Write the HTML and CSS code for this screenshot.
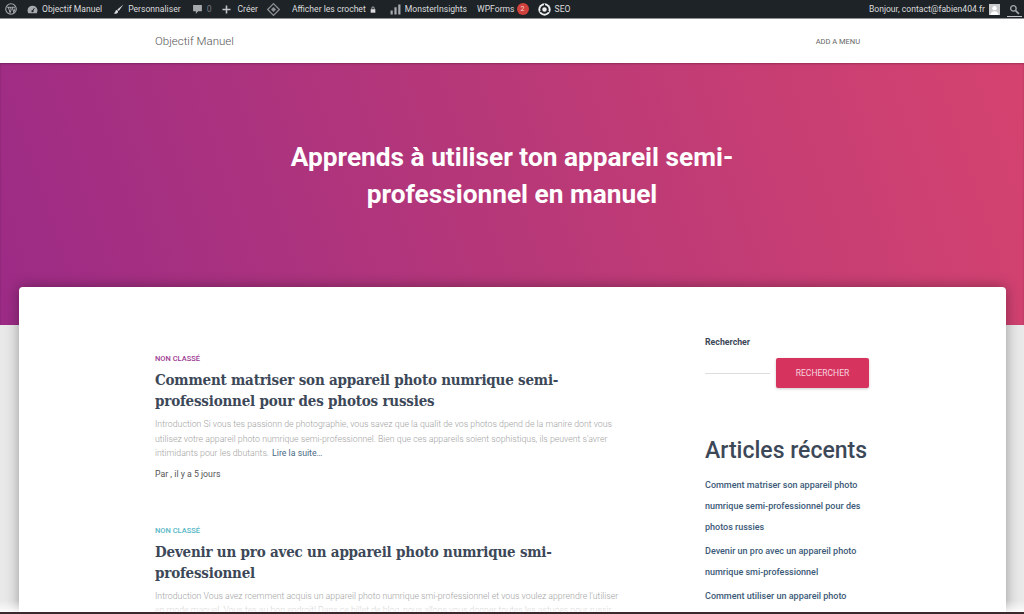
FILE: index.html
```html
<!DOCTYPE html>
<html lang="fr">
<head>
    <meta charset="UTF-8">
    <meta name="viewport" content="width=device-width, initial-scale=1.0">
    <title>Objectif Manuel</title>
    <link rel="stylesheet" href="styles.css">
</head>
<body>

    <div class="adminbar">
        <div class="adminbar-group">
            <svg class="icon wp-icon" viewBox="0 0 20 20"><circle cx="10" cy="10" r="8.800" fill="none" stroke="#a7aaad" stroke-width="1.800"/><path d="M3.500 7h6M5.500 7l3 9 1.800-5-1.300-4M10.500 7h6M12 7l2.600 8.500 2-6" fill="none" stroke="#a7aaad" stroke-width="1.700"/></svg>
            <span class="bar-item first-item">
                <svg class="icon" viewBox="0 0 20 20"><path d="M10 3a9 9 0 0 0-9 9c0 1.800.5 3.400 1.400 4.800h15.200A9 9 0 0 0 19 12a9 9 0 0 0-9-9z" fill="#a7aaad"/><path d="M10 12.500l3.500-5" stroke="#1d2327" stroke-width="1.800"/><circle cx="10" cy="13" r="2" fill="#1d2327"/></svg>
                Objectif Manuel
            </span>
            <span class="bar-item brush">
                <svg class="icon" viewBox="0 0 20 20"><path d="M19 1L8 10l2.500 2.500L19 1zM7 11c-2.500 0-2.500 2.500-3 3.500-.4.800-1.500 1.500-3 2.500 3.500 1.500 7 .5 8-2 .5-1.500-.5-4-2-4z" fill="#dcdcde"/></svg>
                Personnaliser
            </span>
            <span class="bar-item comments">
                <svg class="icon" viewBox="0 0 20 20"><path d="M2 2h16v11h-7l-4 5v-5H2z" fill="#a7aaad"/></svg>
                <span class="muted">0</span>
            </span>
            <span class="bar-item create">
                <svg class="icon plus" viewBox="0 0 20 20"><path d="M10 1v18M1 10h18" stroke="#c3c4c7" stroke-width="3.500"/></svg>
                Créer
            </span>
            <svg class="icon diamond" viewBox="0 0 20 20"><path d="M10 1l9 9-9 9-9-9z" fill="none" stroke="#8c8f94" stroke-width="2"/><path d="M10 6l4 4-4 4-4-4z" fill="#8c8f94"/></svg>
            <span class="bar-item hooks">
                Afficher les crochet
                <svg class="lock" viewBox="0 0 10 12"><path d="M1 5.500h8V11.500H1z" fill="#dcdcde"/><path d="M3 5.500V3.500a2 2 0 0 1 4 0v2" fill="none" stroke="#dcdcde" stroke-width="1.200"/></svg>
            </span>
            <span class="bar-item insights">
                <svg class="icon" viewBox="0 0 20 20"><path d="M1 12h4v7H1zM8 6h4v13H8zM15 1h4v18h-4z" fill="#a7aaad"/></svg>
                MonsterInsights
            </span>
            <span class="bar-item wpforms">WPForms <span class="count">2</span></span>
            <span class="bar-item seo">
                <svg class="icon seo-icon" viewBox="0 0 20 20"><circle cx="10" cy="10" r="9.500" fill="#f0f0f1"/><circle cx="10" cy="10" r="5" fill="none" stroke="#1d2327" stroke-width="3"/><path d="M10 1v4M2.500 14l3.500-2M17.500 14L14 12" stroke="#1d2327" stroke-width="1.500"/></svg>
                SEO
            </span>
        </div>
        <div class="adminbar-group">
            <span class="bar-item">Bonjour, contact@fabien404.fr</span>
            <svg class="avatar" viewBox="0 0 12 12"><rect width="12" height="12" fill="#c9cacb"/><circle cx="6" cy="4.500" r="2.400" fill="#fff"/><path d="M1.500 12c.5-3 2.500-4 4.500-4s4 1 4.500 4z" fill="#fff"/></svg>
            <span class="bar-search">
                <svg class="icon" viewBox="0 0 20 20"><circle cx="8" cy="8" r="5" fill="none" stroke="#a7aaad" stroke-width="2.400"/><path d="M12 12l6 6" stroke="#a7aaad" stroke-width="3"/></svg>
            </span>
        </div>
    </div>

    <div class="site-header">
        <a class="site-title">Objectif Manuel</a>
        <a class="add-menu">ADD A MENU</a>
    </div>

    <div class="hero">
        <h1>Apprends à utiliser ton appareil semi-professionnel en manuel</h1>
    </div>

    <div class="page-band">
        <div class="card">
            <div class="posts">
                <div class="post">
                    <div class="category purple">NON CLASSÉ</div>
                    <h2>Comment matriser son appareil photo numrique semi-professionnel pour des photos russies</h2>
                    <p class="excerpt">Introduction Si vous tes passionn de photographie, vous savez que la qualit de vos photos dpend de la manire dont vous utilisez votre appareil photo numrique semi-professionnel. Bien que ces appareils soient sophistiqus, ils peuvent s'avrer intimidants pour les dbutants. <a class="more">Lire la suite…</a></p>
                    <p class="byline">Par , il y a 5 jours</p>
                </div>
                <div class="post">
                    <div class="category teal">NON CLASSÉ</div>
                    <h2>Devenir un pro avec un appareil photo numrique smi-professionnel</h2>
                    <p class="excerpt">Introduction Vous avez rcemment acquis un appareil photo numrique smi-professionnel et vous voulez apprendre l'utiliser en mode manuel. Vous tes au bon endroit! Dans ce billet de blog, nous allons vous donner toutes les astuces pour russir</p>
                </div>
            </div>
            <div class="sidebar">
                <div class="widget-label">Rechercher</div>
                <div class="search-row">
                    <div class="search-input"></div>
                    <button class="search-btn">RECHERCHER</button>
                </div>
                <h3>Articles récents</h3>
                <ul class="recent">
                    <li>Comment matriser son appareil photo numrique semi-professionnel pour des photos russies</li>
                    <li>Devenir un pro avec un appareil photo numrique smi-professionnel</li>
                    <li>Comment utiliser un appareil photo</li>
                </ul>
            </div>
        </div>
    </div>

    <div class="bottom-fade"></div>

</body>
</html>
```

FILE: styles.css
```css
html, body {
    height: 614px;
    overflow: hidden;
}

body {
    font-family: Roboto, Arial, sans-serif;
    background-color: #e9e9e9;
    margin: 0;
    color: #3c4858;
}

.adminbar {
    height: 19px;
    background-color: #1d2327;
    color: #dcdcde;
    font-size: 8.600px;
    display: flex;
    justify-content: space-between;
    align-items: center;
    padding: 0 2px 0 5px;
    border-bottom: 1px solid #8f9194;
    box-sizing: border-box;
    white-space: nowrap;
}

.adminbar-group {
    display: flex;
    align-items: center;
}

.bar-item {
    display: flex;
    align-items: center;
    gap: 4px;
}

.icon {
    width: 11px;
    height: 11px;
    flex: none;
}

.wp-icon { width: 12px; height: 12px; }
.first-item { margin-left: 10px; }
.brush { margin-left: 11px; }
.comments { margin-left: 11px; }
.create { margin-left: 11px; gap: 6px; }
.plus { width: 9px; height: 9px; }
.muted { color: #787c82; }
.diamond { width: 13px; height: 13px; margin-left: 9px; }
.hooks { margin-left: 12px; }
.lock { width: 6px; height: 7px; }
.insights { margin-left: 14px; }
.wpforms { margin-left: 10px; gap: 2px; }
.seo { margin-left: 9px; }
.seo-icon { width: 13px; height: 13px; }

.count {
    width: 12px;
    height: 12px;
    border-radius: 50%;
    background-color: #d0403c;
    color: #f4d9d6;
    font-size: 7px;
    line-height: 12px;
    text-align: center;
}

.avatar {
    width: 11px;
    height: 11px;
    margin-left: 4px;
}

.bar-search {
    display: flex;
    margin-left: 7px;
    padding: 2px 2px 1px;
    border-bottom: 1px solid #c3c4c7;
}

.site-header {
    height: 44px;
    background-color: #fff;
    display: flex;
    justify-content: space-between;
    align-items: center;
    padding: 0 164px 0 155px;
}

.site-title {
    font-size: 11.500px;
    font-weight: 300;
    color: #555;
}

.add-menu {
    font-size: 7.500px;
    color: #666;
}

.hero {
    height: 262px;
    box-sizing: border-box;
    padding-top: 76px;
    background: linear-gradient(72deg, #9c2b86 0%, #b73878 50%, #d5436f 100%);
    box-shadow: inset 0 1px 2px rgba(0,0,0,0.25);
}

.hero h1 {
    width: 480px;
    margin: 0 auto;
    color: #fff;
    font-size: 26.250px;
    font-weight: 700;
    line-height: 37px;
    text-align: center;
}

.page-band {
    height: 290px;
}

.card {
    margin: -38px 18px 0 19px;
    height: 400px;
    background-color: #fff;
    border-radius: 4px;
    box-shadow: 0 0 14px rgba(0,0,0,0.35);
    display: flex;
    box-sizing: border-box;
    padding: 66px 0 0 136px;
    position: relative;
}

.posts {
    width: 470px;
}

.post {
    margin-bottom: 44px;
}

.category {
    font-size: 7.500px;
    font-weight: 500;
    line-height: 11px;
}

.purple { color: #9c3a92; }
.teal { color: #55b6c6; }

.post h2 {
    font-family: "DejaVu Serif Condensed", "DejaVu Serif", serif;
    font-size: 15px;
    font-weight: 700;
    letter-spacing: -0.2px;
    line-height: 21px;
    color: #3c4858;
    margin: 6px 0 5px;
}

.excerpt {
    font-size: 8.750px;
    font-weight: 300;
    line-height: 14.500px;
    color: #a3a3a3;
    margin: 0 0 5px;
}

.more {
    color: #4a6a85;
    font-weight: 400;
    margin-left: 1px;
}

.byline {
    font-size: 8.750px;
    line-height: 14px;
    color: #555;
    margin: 6px 0 0;
}

.sidebar {
    width: 165px;
    margin-left: 80px;
    margin-top: -17px;
}

.widget-label {
    font-size: 8.750px;
    font-weight: 700;
    line-height: 12px;
}

.search-row {
    display: flex;
    align-items: flex-start;
    margin-top: 10px;
}

.search-input {
    width: 65px;
    height: 15px;
    border-bottom: 1px solid #ddd;
}

.search-btn {
    width: 93px;
    height: 30px;
    margin-left: 6px;
    background-color: #d7335f;
    color: #f6d5df;
    border: none;
    border-radius: 2px;
    font-family: Roboto, Arial, sans-serif;
    font-size: 8.500px;
    box-shadow: 0 1px 3px rgba(0,0,0,0.2);
}

.sidebar h3 {
    font-size: 23px;
    font-weight: 500;
    line-height: 30px;
    margin: 48px 0 9px;
}

.recent {
    list-style: none;
    margin: 0;
    padding: 0;
}

.recent li {
    font-size: 9px;
    font-weight: 500;
    line-height: 21px;
    color: #3c5a78;
    margin-bottom: 3px;
}

.bottom-fade {
    position: fixed;
    left: 0;
    right: 0;
    bottom: 0;
    height: 14px;
    background: linear-gradient(rgba(255,255,255,0), rgba(255,255,255,0.8) 85%, #3a2a2e 85%);
}
```
